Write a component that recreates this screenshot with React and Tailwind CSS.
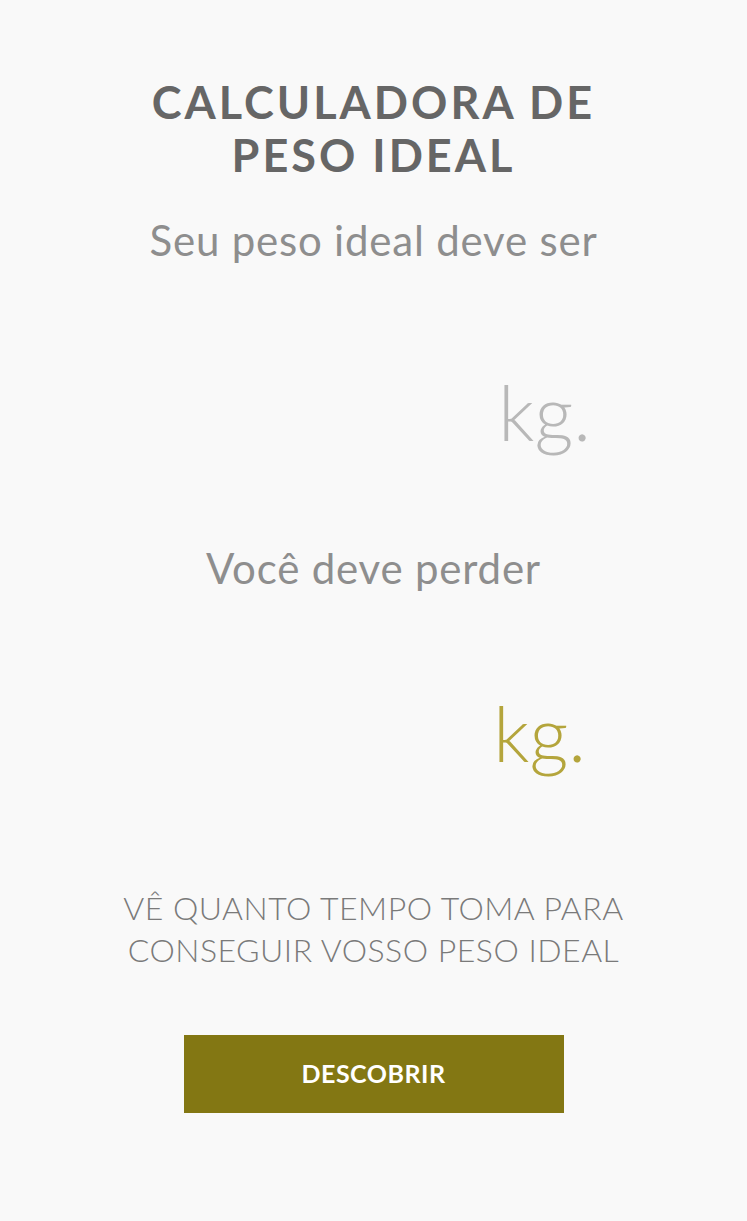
import React from 'react';

export default function App() {
    return (
        <div className="min-h-[1221px] bg-[#f9f9f9] font-['Lato','Open_Sans',sans-serif] flex flex-col items-center">

            {/* Title */}
            <h1 className="mt-[76px] text-[45px] leading-[53px] font-bold tracking-[3px] text-[#666666] text-center">
                CALCULADORA DE<br />PESO IDEAL
            </h1>

            <p className="mt-[34px] text-[42px] leading-[48px] text-[#8e8e8e] tracking-[0.8px]">
                Seu peso ideal deve ser
            </p>

            {/* Ideal weight value */}
            <div className="w-full flex justify-end pr-[156px] mt-[106px]">
                <span className="text-[76px] leading-[84px] font-light text-[#b8b8b8]">kg.</span>
            </div>

            <p className="mt-[90px] text-[42px] leading-[48px] text-[#8e8e8e] tracking-[0.8px]">
                Você deve perder
            </p>

            {/* Weight to lose */}
            <div className="w-full flex justify-end pr-[161px] mt-[99px]">
                <span className="text-[76px] leading-[84px] font-light text-[#b4a53c]">kg.</span>
            </div>

            <p className="mt-[112px] text-[32px] leading-[42px] text-[#7a7a7a] text-center tracking-[0.5px] font-light">
                VÊ QUANTO TEMPO TOMA PARA<br />CONSEGUIR VOSSO PESO IDEAL
            </p>

            <button className="mt-[64px] w-[380px] h-[78px] bg-[#837713] text-white text-[25px] font-bold tracking-[0.5px]">
                DESCOBRIR
            </button>
        </div>
    );
}
